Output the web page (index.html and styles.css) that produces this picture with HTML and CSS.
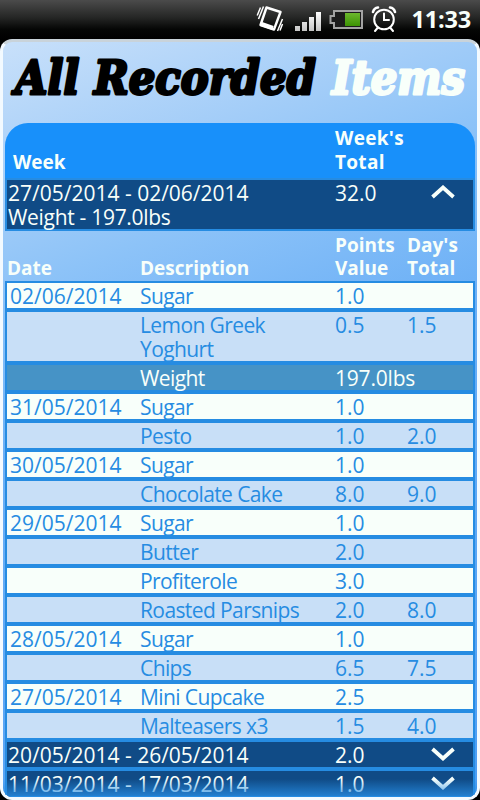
FILE: index.html
```html
<!DOCTYPE html>
<html lang="en">
<head>
  <meta charset="UTF-8" />
  <meta name="viewport" content="width=device-width,initial-scale=1.0"/>
  <title>All Recorded Items</title>
  <link rel="stylesheet" href="styles.css">
</head>
<body>
  <div class="statusbar">
    <svg class="status-icons" width="150" height="38" viewBox="250 0 150 38">
      <defs>
        <linearGradient id="bars" x1="0" y1="0" x2="0" y2="1">
          <stop offset="0" stop-color="#fff"/><stop offset="1" stop-color="#c4c4c4"/>
        </linearGradient>
        <linearGradient id="charge" x1="0" y1="0" x2="0" y2="1">
          <stop offset="0" stop-color="#6cb82e"/><stop offset="1" stop-color="#3c9203"/>
        </linearGradient>
      </defs>
      <!-- vibrate -->
      <g fill="none" stroke="#fff">
        <path d="M266.5 7.500L280.500 12L274 29.500L260.500 25Z" stroke-width="2.400" stroke-linejoin="round"/>
        <path d="M261.500 24L273 28" stroke-width="4"/>
        <path d="M263.500 6.500L258.500 19M260.500 7.500L257.200 15.500M282.500 19L277.500 31M282.500 24L280 30.500" stroke-width="1.500"/>
      </g>
      <!-- signal -->
      <path fill="url(#bars)" d="M295 26h5v5h-5zM302 22h5v9h-5zM309 17h5v14h-5zM316 12h5v19h-5z"/>
      <!-- battery -->
      <path d="M334 11H362V28H334V23H330.500V16H334Z" fill="#1c1c1c" stroke="#a3a3a3" stroke-width="2"/>
      <rect x="345" y="13" width="15" height="13" fill="url(#charge)"/>
      <!-- alarm clock -->
      <g fill="none" stroke="#fff" stroke-width="2" stroke-linecap="round">
        <circle cx="384" cy="19.500" r="9.800"/>
        <path d="M384 13.500V20H389M377.500 28L375 31M390.500 28L393 31"/>
        <path d="M373 12Q374 8 378 7.500M390 7.500Q394 8 395 12" stroke-width="2.600"/>
      </g>
    </svg>
    <span class="clock">11:33</span>
  </div>

  <div class="screen">
    <h1 class="title">
      <svg width="474" height="81" viewBox="3 42 474 81">
        <text class="title-dark" x="15" y="93.500" textLength="301" lengthAdjust="spacingAndGlyphs">All Recorded</text>
        <text class="title-light" x="332" y="93.500" textLength="133" lengthAdjust="spacingAndGlyphs">Items</text>
      </svg>
    </h1>

    <div class="list">
      <div class="week-head">
        <span class="week">Week</span>
        <span class="total">Week's<br>Total</span>
      </div>
      <div class="week-row">
        <span class="week">27/05/2014 - 02/06/2014<br><span class="note">Weight - 197.0lbs</span></span>
        <span class="total">32.0</span>
        <svg class="chevron" width="24" height="14" viewBox="0 0 24 14"><path d="M1.500 12L12 2.500L22.500 12"/></svg>
      </div>

      <div class="item-head">
        <span class="date">Date</span><span class="desc">Description</span><span class="points">Points<br>Value</span><span class="day">Day's<br>Total</span>
      </div>
      <div class="item"><span class="date">02/06/2014</span><span class="desc">Sugar</span><span class="points">1.0</span></div>
      <div class="item alt"><span class="date"></span><span class="desc">Lemon Greek<br>Yoghurt</span><span class="points">0.5</span><span class="day">1.5</span></div>
      <div class="item weight"><span class="date"></span><span class="desc">Weight</span><span class="points">197.0lbs</span></div>
      <div class="item"><span class="date">31/05/2014</span><span class="desc">Sugar</span><span class="points">1.0</span></div>
      <div class="item alt"><span class="date"></span><span class="desc">Pesto</span><span class="points">1.0</span><span class="day">2.0</span></div>
      <div class="item"><span class="date">30/05/2014</span><span class="desc">Sugar</span><span class="points">1.0</span></div>
      <div class="item alt"><span class="date"></span><span class="desc">Chocolate Cake</span><span class="points">8.0</span><span class="day">9.0</span></div>
      <div class="item"><span class="date">29/05/2014</span><span class="desc">Sugar</span><span class="points">1.0</span></div>
      <div class="item alt"><span class="date"></span><span class="desc">Butter</span><span class="points">2.0</span></div>
      <div class="item"><span class="date"></span><span class="desc">Profiterole</span><span class="points">3.0</span></div>
      <div class="item alt"><span class="date"></span><span class="desc">Roasted Parsnips</span><span class="points">2.0</span><span class="day">8.0</span></div>
      <div class="item"><span class="date">28/05/2014</span><span class="desc">Sugar</span><span class="points">1.0</span></div>
      <div class="item alt"><span class="date"></span><span class="desc">Chips</span><span class="points">6.5</span><span class="day">7.5</span></div>
      <div class="item"><span class="date">27/05/2014</span><span class="desc">Mini Cupcake</span><span class="points">2.5</span></div>
      <div class="item alt"><span class="date"></span><span class="desc">Malteasers x3</span><span class="points">1.5</span><span class="day">4.0</span></div>

      <div class="week-row">
        <span class="week">20/05/2014 - 26/05/2014</span>
        <span class="total">2.0</span>
        <svg class="chevron" width="24" height="14" viewBox="0 0 24 14"><path d="M1.500 2L12 11.500L22.500 2"/></svg>
      </div>
      <div class="week-row">
        <span class="week">11/03/2014 - 17/03/2014</span>
        <span class="total">1.0</span>
        <svg class="chevron" width="24" height="14" viewBox="0 0 24 14"><path d="M1.500 2L12 11.500L22.500 2"/></svg>
      </div>
    </div>
    <div class="fade"></div>
  </div>
</body>
</html>
```
FILE: styles.css
```css
:root {
  --blue: #1890fa;
  --line: #268ce2;
  --navy: #104b86;
  --white: #f8fffa;
  --alt: #c8dff7;
  --steel: #4693c6;
}
* { box-sizing: border-box; margin: 0; padding: 0; }
body {
  width: 480px;
  height: 800px;
  overflow: hidden;
  background: #000;
  color: var(--white);
  font-family: "Open Sans", "Noto Sans", sans-serif;
  font-size: 21px;
  line-height: 24px;
}

/* Status bar */
.statusbar {
  display: flex;
  justify-content: flex-end;
  height: 39px;
  padding-right: 9px;
  background: linear-gradient(#4b4b4b, #252625 45%, #050605 75%, #000);
}
.clock {
  width: 71px;
  text-align: right;
  font-size: 23.5px;
  font-weight: bold;
  line-height: 39px;
  letter-spacing: -0.2px;
  white-space: nowrap;
}

/* Screen */
.screen {
  position: relative;
  height: 761px;
  border: 3px solid #f3faff;
  border-top-color: #c9d3da;
  border-radius: 12px;
  overflow: hidden;
  background: linear-gradient(160deg, #c8e0fa 0, #a3cdf8 17%, #8dc3f8 27%, #6cb0f6 45%, #4b9df4 100%);
}
.title { height: 81px; }
.title svg { display: block; }
.title text {
  font-family: "DejaVu Serif", serif;
  font-size: 47px;
  font-weight: bold;
  font-style: italic;
  stroke-width: 3px;
  stroke-linejoin: round;
}
.title-dark { fill: #000; stroke: #000; }
.title-light { fill: var(--white); stroke: var(--white); }

.list { padding: 0 2px; }
.week-head, .item-head { font-weight: bold; font-size: 19px; display: flex; align-items: flex-end; }
.week-head {
  height: 55px;
  padding: 0 0 4px 8px;
  background: var(--blue);
  border-radius: 23px 23px 0 0;
}
.week-head .week { width: 322px; }
.week-head .total { letter-spacing: 0.3px; }

.week-row {
  display: flex;
  min-height: 29px;
  padding: 1px 18px 0 1px;
  border: 2px solid var(--line);
  background: var(--navy);
}
.week-row .week { width: 327px; }
.week-row .total { flex: 1; }
.note { letter-spacing: -0.3px; }
.chevron { margin-top: 4px; }
.chevron path {
  fill: none;
  stroke: var(--white);
  stroke-width: 3.8;
}

.item-head { height: 50px; padding: 0 0 1px 2px; line-height: 23px; }
.item-head .date { width: 133px; }
.item {
  display: flex;
  min-height: 29px;
  padding: 1px 0 0 3px;
  border: 2px solid var(--line);
  background: var(--white);
  color: var(--line);
}
.item.alt { background: var(--alt); }
.item.weight { background: var(--steel); color: var(--white); }
.item .date { width: 130px; }
.item .desc { letter-spacing: -0.6px; }
.item.weight .points { letter-spacing: -0.2px; }
.desc { width: 195px; }
.points { width: 72px; white-space: nowrap; }

.fade {
  position: absolute;
  left: 0;
  right: 0;
  bottom: 0;
  height: 18px;
  background: linear-gradient(rgba(38, 140, 226, 0), rgba(38, 140, 226, 0.85));
}
```
